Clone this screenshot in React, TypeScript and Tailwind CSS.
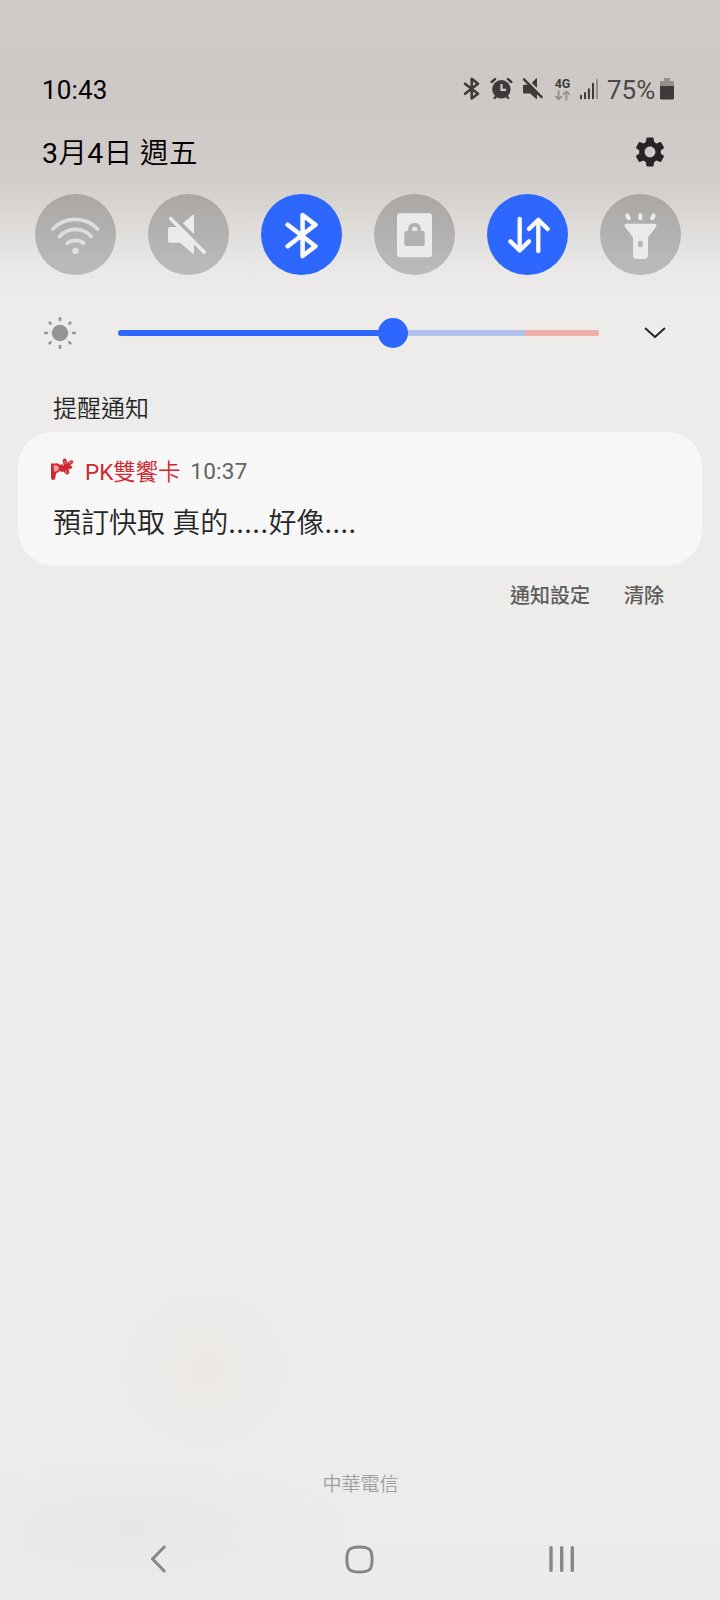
import React from 'react';
import { MdSettings } from 'react-icons/md';

interface TileProps {
  active?: boolean;
  label: string;
  children: React.ReactNode;
}

const Tile = ({ active = false, label, children }: TileProps) => (
  <button
    aria-label={label}
    className={`size-[81px] shrink-0 rounded-full ${active ? 'bg-[#2d67ff] text-[#fafafa]' : 'bg-black/20 text-[#ebebeb]'}`}
  >
    <svg viewBox="0 0 81 81" className="size-full" fill="none" strokeLinecap="round" strokeLinejoin="round">
      {children}
    </svg>
  </button>
);

const StatusBar = () => (
  <div className="flex h-[36px] items-center justify-between pl-[42px] pr-[46px]">
    <span className="mt-[2px] text-[26px] leading-[36px] tracking-[0.15px] text-black">10:43</span>
    <div className="flex h-[24px] items-center text-[#3d3b39]">
      <svg width="17" height="24" viewBox="0 0 17 24" fill="none" stroke="currentColor" strokeWidth="2.6" strokeLinecap="round" strokeLinejoin="round">
        <path d="M2 6.7 15 16.7 8.7 21.5V1.9L15 6.7 2 16.7" />
      </svg>
      <svg className="ml-[10px]" width="23" height="24" viewBox="0 0 23 24" fill="none" stroke="currentColor" strokeWidth="2.4" strokeLinecap="round">
        <circle cx="11.4" cy="12.3" r="9.2" fill="currentColor" stroke="none" />
        <path d="M1.7 5 5 2.1M18 2.1 21.3 5M4.6 21 6.5 19M18.2 21 16.3 19" />
        <path d="M11.5 7V12.8H16" stroke="#cec9c6" strokeWidth="2.2" strokeLinecap="butt" />
      </svg>
      <svg className="ml-[9px]" width="22" height="24" viewBox="0 0 22 24" fill="currentColor">
        <path d="M2 2.3 19.6 20.2" stroke="currentColor" strokeWidth="2.4" strokeLinecap="round" />
        <path d="M9.8 6 14.2 1.3 15 1.6V11ZM1.8 7.7H7.5L15 15.3V22H14.2L8.2 16.4H1.8L1 15.6V8.5Z" />
      </svg>
      <div className="ml-[10px] flex w-[17px] flex-col items-center">
        <span className="text-[12.5px] font-bold leading-[13px]">4G</span>
        <svg width="17" height="11" viewBox="0 0 17 11" fill="none" stroke="#94908d" strokeWidth="1.8" strokeLinecap="round" strokeLinejoin="round">
          <path d="M4.6 1V9.4M1.8 6.6 4.6 9.4 7.4 6.6M12.4 9.8V1.4M9.6 4.2 12.4 1.4 15.2 4.2" />
        </svg>
      </div>
      <svg className="ml-[9px]" width="18" height="24" viewBox="0 0 18 24" fill="currentColor">
        <rect x="0" y="17.8" width="2" height="4.4" rx=".8" />
        <rect x="4" y="15" width="2" height="7.2" rx=".8" />
        <rect x="7.9" y="11.2" width="2" height="11" rx=".8" />
        <rect x="12" y="5.7" width="2" height="16.5" rx=".8" />
        <rect x="16" y="2" width="2" height="20.2" rx=".8" fill="#94908d" />
      </svg>
      <span className="ml-[9px] mt-[2px] w-[49px] whitespace-nowrap text-[26px] leading-[36px] text-[#4b4947]">75%</span>
      <svg className="ml-[4px]" width="14" height="24" viewBox="0 0 14 24" fill="currentColor">
        <path d="M4 1h6v3h3l1 1v4H0V5l1-1h3z" fill="#94908d" />
        <path d="M0 9h14v12.5l-1 1H1l-1-1z" />
      </svg>
    </div>
  </div>
);

const QuickTiles = () => (
  <div className="flex justify-between pl-[35px] pr-[39px]">
    <Tile label="Wi-Fi">
      <g stroke="#dededd" strokeWidth="3.8">
        <path d="M17.9 35A31 31 0 0 1 62.7 35M24.6 42.4A21.3 21.3 0 0 1 56.2 42.4M32.3 49.2A12.8 12.8 0 0 1 48.5 49.2" />
      </g>
      <circle cx="40.4" cy="57" r="3.2" fill="#dededd" />
    </Tile>
    <Tile label="靜音">
      <path d="M22.7 24.7 56.3 58.3" stroke="currentColor" strokeWidth="3.6" />
      <path d="M35 29.3 44.6 21Q46 20.2 46 21.8V40.3ZM22 33H31L46 48V59Q46 60.6 44.6 59.4L32 48.8H22Q20 48.8 20 46.8V35Q20 33 22 33Z" fill="currentColor" />
    </Tile>
    <Tile label="藍牙" active>
      <path d="M26.7 30.8 54.4 52.2 41.6 62V21L54.4 30.8 26.7 52.2" stroke="currentColor" strokeWidth="4.6" />
    </Tile>
    <Tile label="鎖定">
      <rect x="23" y="19.3" width="35" height="44" rx="3" fill="currentColor" />
      <rect x="30.3" y="36.7" width="20.4" height="15.4" rx="2.2" fill="#b4b2b1" />
      <path d="M36 38V34.6A4.7 4.7 0 0 1 45.2 34.6V38" stroke="#b4b2b1" strokeWidth="3.7" />
    </Tile>
    <Tile label="行動數據" active>
      <path d="M32.7 24.9V56.5M23.4 47.4 32.7 56.5 42 47.4M51.3 57.2V25.8M42 35.1 51.3 25.8 60.6 35.1" stroke="currentColor" strokeWidth="4.3" />
    </Tile>
    <Tile label="手電筒">
      <path d="M26 29.7H55Q56.5 29.7 56.5 31.2 56.5 32.5 55.6 33.6L48 43.5V61Q48 65 44 65H37Q33 65 33 61V43.5L25.4 33.6Q24.5 32.5 24.5 31.2 24.5 29.7 26 29.7Z" fill="currentColor" />
      <ellipse cx="40.4" cy="50" rx="2.5" ry="3.2" fill="#b6b5b4" />
      <path d="M40.4 21.2V24.2M27.2 21.5 28.7 24.2M53.7 21.5 52.2 24.2" stroke="currentColor" strokeWidth="4.1" />
    </Tile>
  </div>
);

const Brightness = () => (
  <div className="flex h-[34px] items-center pl-[43px]">
    <svg width="34" height="34" viewBox="0 0 34 34" fill="none" stroke="#959595" strokeWidth="2.7" strokeLinecap="round">
      <circle cx="17" cy="17" r="8.2" fill="#959595" stroke="none" />
      <path d="M17 2.3v1.6M17 30.1v1.6M2.3 17h1.6M30.1 17h1.6M6.6 6.6l1 1M26.4 26.4l1 1M6.6 27.4l1-1M26.4 7.6l1-1" />
    </svg>
    <div className="relative ml-[41px] flex h-[6px] w-[481px] overflow-visible">
      <div className="w-[275px] rounded-l-full bg-[#2d67ff]" />
      <div className="w-[132px] bg-[#b2c0ec]" />
      <div className="w-[74px] rounded-r-[2px] bg-[#f0aeaa]" />
      <div className="absolute left-[260px] top-[-12px] size-[30px] rounded-full bg-[#2d67ff]" />
    </div>
    <svg className="ml-[45px]" width="22" height="12" viewBox="0 0 22 12" fill="none" stroke="#252525" strokeWidth="2" strokeLinecap="round" strokeLinejoin="round">
      <path d="M1.6 1.6 11 10 20.4 1.6" />
    </svg>
  </div>
);

const PkLogo = () => (
  <svg className="-mt-[3px]" width="23" height="23" viewBox="0 0 23 23" fill="#d22630">
    <path d="M0 5.5H3.8Q8.5 4.5 10.5 9 10 13 5 15.5L4 21.5 1 22 0 20Z" />
    <path d="M2.6 7.6Q6.5 6.4 8.4 10 7 13.4 3 13.8Z" fill="#e9a0a4" />
    <path d="M9.5 7 11 6 13 8 11.6 2.4Q12.6-.6 15.2 1L16.4 5 19 2.6Q22.4 1.2 22.4 4.6L19 7.6 21 8.3Q22 10 19.5 10.7L17.4 11 18.4 14.5Q17.2 17.6 15 16L12.5 13.6 10 14 8.5 11.5Z" />
    <path d="M13.6 3.4 14.8 6M18.4 5 20.2 3.8M14.6 12.6 16 14.6" stroke="#e07a80" strokeWidth="1.2" strokeLinecap="round" />
  </svg>
);

const NotificationCard = () => (
  <div className="ml-[18px] mr-[18px] h-[133px] rounded-[35px] bg-[#f7f7f7] pl-[33px] pt-[25px]">
    <div className="flex h-[28px] items-center leading-[28px]">
      <PkLogo />
      <span className="ml-[11px] mt-px text-[22.5px] text-[#d22630]">PK<span className="font-[350] tracking-[-0.2px]">雙饗卡</span></span>
      <span className="ml-[10px] text-[22.5px] tracking-[0.3px] text-[#626262]">10:37</span>
    </div>
    <p className="ml-[2px] mt-[16px] whitespace-nowrap font-['Noto_Sans_CJK_TC',sans-serif] text-[28px] font-[350] leading-[40px] text-[#252525]">
      預訂快取 <span className="ml-px">真的</span><span className="tracking-[0.5px]">.....</span>好像<span className="tracking-[0.5px]">....</span>
    </p>
  </div>
);

const NavBar = () => (
  <div className="flex h-[30px] items-center pl-[149px] text-[#868686]">
    <svg width="18" height="28" viewBox="0 0 18 28" fill="none" stroke="currentColor" strokeWidth="3" strokeLinecap="round" strokeLinejoin="round">
      <path d="M15.2 2 3.5 14 15.2 26" />
    </svg>
    <svg className="ml-[178px]" width="29" height="29" viewBox="0 0 29 29" fill="none" stroke="currentColor" strokeWidth="3">
      <path d="M14.5 1.9C24.5 1.9 27.1 4.5 27.1 14.5S24.5 27.1 14.5 27.1 1.9 24.5 1.9 14.5 4.5 1.9 14.5 1.9Z" />
    </svg>
    <svg className="ml-[175px]" width="26" height="28" viewBox="0 0 26 28" fill="none" stroke="currentColor" strokeWidth="3.4" strokeLinecap="round">
      <path d="M2 2.6V25.4M12.7 2.6V25.4M23.3 2.6V25.4" />
    </svg>
  </div>
);

export default function App() {
  return (
    <div className="flex h-[1600px] w-[720px] flex-col overflow-hidden bg-[radial-gradient(ellipse_90px_85px_at_205px_1370px,#ebe8e5_0%,#ebe8e500_100%),radial-gradient(ellipse_220px_70px_at_130px_1528px,#e8e7e6_0%,#e8e7e600_100%),linear-gradient(180deg,#d1ccc9_0px,#cdc8c5_80px,#d0cbc8_150px,#d3cecb_185px,#dedbd9_225px,#e9e8e6_265px,#edecea_300px,#edecea_1450px,#ebebea_1600px)] font-[Roboto,'Noto_Sans_CJK_TC',sans-serif]">
      <div className="pt-[71px]">
        <StatusBar />
      </div>
      <div className="mt-[26px] flex h-[38px] items-center justify-between pl-[42px] pr-[52px]">
        <span className="mt-[4px] text-[28.5px] leading-[38px] tracking-[0.4px] text-black">
          3<span className="font-[350]">月</span>4<span className="font-[350]">日 週五</span>
        </span>
        <MdSettings className="size-[36px] text-[#252525]" />
      </div>
      <div className="mt-[23px]">
        <QuickTiles />
      </div>
      <div className="mt-[41px]">
        <Brightness />
      </div>
      <h2 className="ml-[53px] mt-[41px] h-[36px] text-[24px] font-[350] leading-[36px] text-[#252525]">提醒通知</h2>
      <div className="mt-[5px]">
        <NotificationCard />
      </div>
      <div className="mt-[16px] flex h-[30px] justify-end gap-[34px] pr-[56px] text-[20px] font-medium leading-[30px] text-[#5c5c5c]">
        <button>通知設定</button>
        <button>清除</button>
      </div>
      <div className="mt-auto pl-px text-center text-[19px] font-[350] leading-[28px] text-[#a0a0a0]">中華電信</div>
      <div className="mb-[26px] mt-[45px]">
        <NavBar />
      </div>
    </div>
  );
}
